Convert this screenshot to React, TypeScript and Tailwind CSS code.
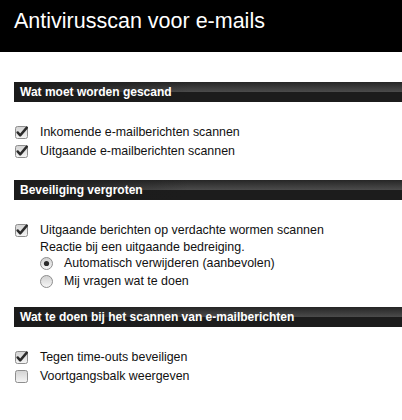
const CheckBox = ({ checked }: { checked: boolean }) => (
  <svg width="13" height="13" viewBox="0 0 13 13" className="shrink-0">
    <defs>
      <linearGradient id="cbg" x1="0" y1="0" x2="0" y2="1">
        <stop offset="0" stopColor="#d2d2d2" />
        <stop offset="1" stopColor="#f5f5f5" />
      </linearGradient>
    </defs>
    <rect x="0.5" y="0.5" width="12" height="12" rx="2" fill="url(#cbg)" stroke="#8e8e8e" />
    {checked && (
      <path d="M2.6 6.4 L5.2 9.4 L11.8 1.6" fill="none" stroke="#2b2b2b" strokeWidth="2.4" strokeLinecap="round" strokeLinejoin="round" />
    )}
  </svg>
);

const Radio = ({ checked }: { checked: boolean }) => (
  <svg width="13" height="13" viewBox="0 0 13 13" className="shrink-0">
    <defs>
      <linearGradient id="rbg" x1="0" y1="0" x2="0" y2="1">
        <stop offset="0" stopColor="#d0d0d0" />
        <stop offset="1" stopColor="#f7f7f7" />
      </linearGradient>
    </defs>
    <circle cx="6.5" cy="6.5" r="6" fill="url(#rbg)" stroke="#8e8e8e" />
    {checked && <circle cx="6.5" cy="6.5" r="2.6" fill="#2b2b2b" />}
  </svg>
);

const SectionBar = ({ title }: { title: string }) => (
  <div className="h-[20px] flex items-center pl-[6px] text-white font-bold text-[12px] leading-none bg-[linear-gradient(to_right,#1b1b1b_0%,rgba(27,27,27,0)_45%),linear-gradient(to_bottom,#262626_0%,#4a4a4a_48%,#1c1c1c_52%,#1c1c1c_100%)]">
    {title}
  </div>
);

const CheckRow = ({ label, checked }: { label: string; checked: boolean }) => (
  <div className="flex items-center h-[19px] pl-px gap-3">
    <CheckBox checked={checked} />
    <span>{label}</span>
  </div>
);

const RadioRow = ({ label, checked }: { label: string; checked: boolean }) => (
  <div className="flex items-center h-[18px] pl-[26px] gap-[11px]">
    <Radio checked={checked} />
    <span>{label}</span>
  </div>
);

export default function App() {
  return (
    <div className="w-[402px] h-[420px] bg-white overflow-hidden font-['Liberation_Sans',Arial,sans-serif] text-[12.4px] text-[#111]">
      <div className="h-[52px] bg-black pl-[14px] pt-[9px]">
        <h1 className="text-white text-[21.5px] leading-[25px]">Antivirusscan voor e-mails</h1>
      </div>

      <div className="pl-[14px]">
        {/* Wat moet worden gescand */}
        <div className="mt-[30px]">
          <SectionBar title="Wat moet worden gescand" />
          <div className="mt-[21px]">
            <CheckRow checked label="Inkomende e-mailberichten scannen" />
            <CheckRow checked label="Uitgaande e-mailberichten scannen" />
          </div>
        </div>

        {/* Beveiliging vergroten */}
        <div className="mt-[19px]">
          <SectionBar title="Beveiliging vergroten" />
          <div className="mt-[21px]">
            <CheckRow checked label="Uitgaande berichten op verdachte wormen scannen" />
            <div className="h-[14px] flex items-center pl-[26px]">Reactie bij een uitgaande bedreiging.</div>
            <RadioRow checked label="Automatisch verwijderen (aanbevolen)" />
            <RadioRow checked={false} label="Mij vragen wat te doen" />
          </div>
        </div>

        {/* Wat te doen */}
        <div className="mt-[17px]">
          <SectionBar title="Wat te doen bij het scannen van e-mailberichten" />
          <div className="mt-[21px]">
            <CheckRow checked label="Tegen time-outs beveiligen" />
            <CheckRow checked={false} label="Voortgangsbalk weergeven" />
          </div>
        </div>
      </div>
    </div>
  );
}
